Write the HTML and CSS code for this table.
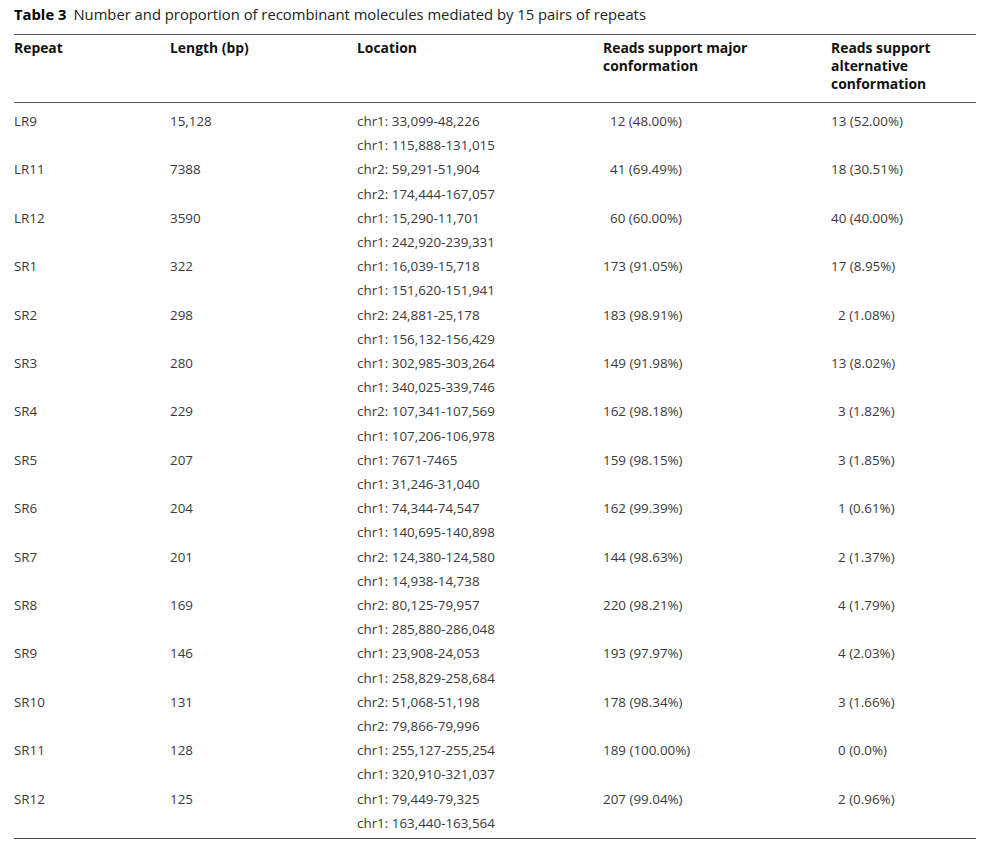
FILE: index.html
```html
<!DOCTYPE html>
<html>
<head>
<meta charset="utf-8">
<link rel="stylesheet" href="styles.css">
</head>
<body>
<div class="page">
  <div class="caption"><span class="cap-label">Table 3</span><span class="cap-text">Number and proportion of recombinant molecules mediated by 15 pairs of repeats</span></div>
  <table class="tbl">
    <colgroup>
      <col class="c1"><col class="c2"><col class="c3"><col class="c4"><col class="c5">
    </colgroup>
    <thead>
      <tr>
        <th>Repeat</th>
        <th>Length (bp)</th>
        <th>Location</th>
        <th>Reads support major<br>conformation</th>
        <th>Reads support<br>alternative<br>conformation</th>
      </tr>
    </thead>
    <tbody>
      <tr><td>LR9</td><td>15,128</td><td>chr1: 33,099-48,226<br>chr1: 115,888-131,015</td><td><span class="pad">12 (48.00%)</span></td><td>13 (52.00%)</td></tr>
      <tr><td>LR11</td><td>7388</td><td>chr2: 59,291-51,904<br>chr2: 174,444-167,057</td><td><span class="pad">41 (69.49%)</span></td><td>18 (30.51%)</td></tr>
      <tr><td>LR12</td><td>3590</td><td>chr1: 15,290-11,701<br>chr1: 242,920-239,331</td><td><span class="pad">60 (60.00%)</span></td><td>40 (40.00%)</td></tr>
      <tr><td>SR1</td><td>322</td><td>chr1: 16,039-15,718<br>chr1: 151,620-151,941</td><td>173 (91.05%)</td><td>17 (8.95%)</td></tr>
      <tr><td>SR2</td><td>298</td><td>chr2: 24,881-25,178<br>chr1: 156,132-156,429</td><td>183 (98.91%)</td><td><span class="pad">2 (1.08%)</span></td></tr>
      <tr><td>SR3</td><td>280</td><td>chr1: 302,985-303,264<br>chr1: 340,025-339,746</td><td>149 (91.98%)</td><td>13 (8.02%)</td></tr>
      <tr><td>SR4</td><td>229</td><td>chr2: 107,341-107,569<br>chr1: 107,206-106,978</td><td>162 (98.18%)</td><td><span class="pad">3 (1.82%)</span></td></tr>
      <tr><td>SR5</td><td>207</td><td>chr1: 7671-7465<br>chr1: 31,246-31,040</td><td>159 (98.15%)</td><td><span class="pad">3 (1.85%)</span></td></tr>
      <tr><td>SR6</td><td>204</td><td>chr1: 74,344-74,547<br>chr1: 140,695-140,898</td><td>162 (99.39%)</td><td><span class="pad">1 (0.61%)</span></td></tr>
      <tr><td>SR7</td><td>201</td><td>chr2: 124,380-124,580<br>chr1: 14,938-14,738</td><td>144 (98.63%)</td><td><span class="pad">2 (1.37%)</span></td></tr>
      <tr><td>SR8</td><td>169</td><td>chr2: 80,125-79,957<br>chr1: 285,880-286,048</td><td>220 (98.21%)</td><td><span class="pad">4 (1.79%)</span></td></tr>
      <tr><td>SR9</td><td>146</td><td>chr1: 23,908-24,053<br>chr1: 258,829-258,684</td><td>193 (97.97%)</td><td><span class="pad">4 (2.03%)</span></td></tr>
      <tr><td>SR10</td><td>131</td><td>chr2: 51,068-51,198<br>chr2: 79,866-79,996</td><td>178 (98.34%)</td><td><span class="pad">3 (1.66%)</span></td></tr>
      <tr><td>SR11</td><td>128</td><td>chr1: 255,127-255,254<br>chr1: 320,910-321,037</td><td>189 (100.00%)</td><td><span class="pad">0 (0.0%)</span></td></tr>
      <tr><td>SR12</td><td>125</td><td>chr1: 79,449-79,325<br>chr1: 163,440-163,564</td><td>207 (99.04%)</td><td><span class="pad">2 (0.96%)</span></td></tr>
    </tbody>
  </table>
</div>
</body>
</html>
```

FILE: styles.css
```css
html, body {
  margin: 0;
  padding: 0;
  background: #ffffff;
}

.page {
  padding: 5px 14px 0 14px;
  font-family: "Open Sans", "Noto Sans", "Liberation Sans", sans-serif;
  color: #3a3a3a;
}

.caption {
  font-size: 14.8px;
  line-height: 18px;
  height: 29px;
  color: #222222;
  white-space: nowrap;
}

.cap-label {
  font-weight: 700;
  color: #000000;
  margin-right: 7px;
}

.tbl {
  width: 962px;
  border-collapse: collapse;
  table-layout: fixed;
  font-size: 13.4px;
}

.c1 { width: 156px; }
.c2 { width: 187px; }
.c3 { width: 246px; }
.c4 { width: 228px; }
.c5 { width: 145px; }

.tbl thead th {
  text-align: left;
  vertical-align: top;
  font-weight: 700;
  font-size: 13.9px;
  color: #111111;
  line-height: 18px;
  padding: 4px 0 9px 0;
  border-top: 1px solid #555555;
  border-bottom: 1px solid #555555;
}

.tbl tbody td {
  text-align: left;
  vertical-align: top;
  line-height: 24.2px;
  padding: 0;
  white-space: nowrap;
}

.tbl tbody tr:first-child td {
  padding-top: 6px;
}

.tbl tbody tr:last-child td {
  padding-bottom: 3px;
  border-bottom: 1px solid #444444;
}

.pad {
  padding-left: 7px;
}
```
